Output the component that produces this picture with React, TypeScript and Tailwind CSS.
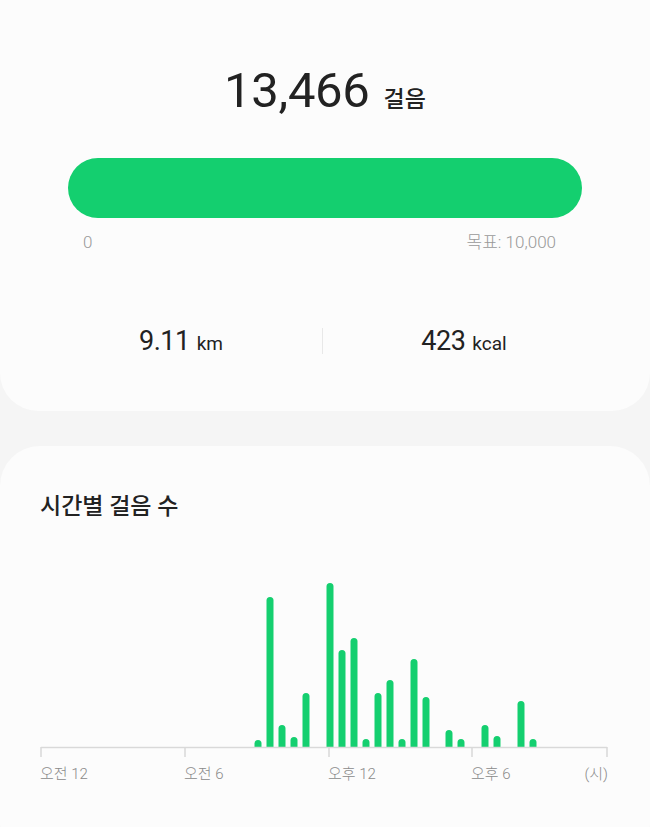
const FONT = { fontFamily: 'Roboto, "Noto Sans CJK KR", sans-serif' };

// [중심 x, 막대 위쪽 y] — 축은 y=177
const bars: [number, number][] = [
  [258, 170], [270, 27], [282, 155], [294, 167], [306, 123],
  [330, 13], [342, 80], [354, 68], [366, 169], [378, 123],
  [390, 110], [402, 169], [414, 89], [426, 127],
  [449, 160], [461, 169], [485, 155], [497, 166], [521, 131], [533, 169],
];

const ticks = [41, 185, 329, 472, 607];

function Bar({ x, top }: { x: number; top: number }) {
  const l = x - 3.5;
  const r = x + 3.5;
  return (
    <path
      d={`M${l},177 V${top + 3.5} A3.5,3.5 0 0 1 ${r},${top + 3.5} V177 Z`}
      fill="#14cf6f"
    />
  );
}

function HourlyChart() {
  return (
    <>
      <svg width={650} height={190} className="block mt-[47px]">
        {bars.map(([x, top]) => (
          <Bar key={x} x={x} top={top} />
        ))}
        <line x1={41} y1={177.5} x2={607} y2={177.5} stroke="#d9d9d9" strokeWidth={1.5} />
        {ticks.map((t) => (
          <line key={t} x1={t} y1={177} x2={t} y2={187} stroke="#d9d9d9" strokeWidth={1.5} />
        ))}
      </svg>
      <div className="flex pl-[40px] mt-[4px] text-[15px] leading-[20px] font-light text-[#8a8a8a]">
        <span className="w-[144px]">오전 12</span>
        <span className="w-[144px]">오전 6</span>
        <span className="w-[143px]">오후 12</span>
        <div className="w-[137px] flex justify-between">
          <span>오후 6</span>
          <span>(시)</span>
        </div>
      </div>
    </>
  );
}

export default function App() {
  return (
    <div className="min-h-screen overflow-hidden bg-[#f5f5f5] text-[#222]" style={FONT}>
      <div className="-mt-[40px] bg-[#fcfcfc] rounded-[38px] pt-[107px] pb-[57px] px-[40px]">
        <div className="flex justify-center items-baseline gap-[14px]">
          <span className="text-[49px] leading-[48px] tracking-[-0.3px]">13,466</span>
          <span className="text-[23px] leading-[22px] font-medium">걸음</span>
        </div>

        <div className="mx-[28px] mt-[43px] h-[60px] rounded-full bg-[#14cf6f]" />
        <div className="mx-[28px] mt-[12px] flex justify-between text-[17px] leading-[24px] font-light text-[#999]">
          <span className="pl-[15px]">0</span>
          <span className="pr-[26px]">목표: 10,000</span>
        </div>

        <div className="mt-[74px] mr-[5px] flex items-center h-[26px]">
          <div className="flex-1 flex justify-center items-baseline gap-[7px]">
            <span className="text-[27px] tracking-[-0.5px]">9.11</span>
            <span className="text-[19px]">km</span>
          </div>
          <div className="w-px h-[26px] bg-[#e8e8e8]" />
          <div className="flex-1 flex justify-center items-baseline gap-[7px]">
            <span className="text-[27px] tracking-[-0.5px]">423</span>
            <span className="text-[19px]">kcal</span>
          </div>
        </div>
      </div>

      <div className="mt-[35px] bg-[#fcfcfc] rounded-[40px] pt-[45px] pb-[80px]">
        <h2 className="px-[40px] text-[23px] leading-[32px] font-medium">시간별 걸음 수</h2>
        <HourlyChart />
      </div>
    </div>
  );
}
